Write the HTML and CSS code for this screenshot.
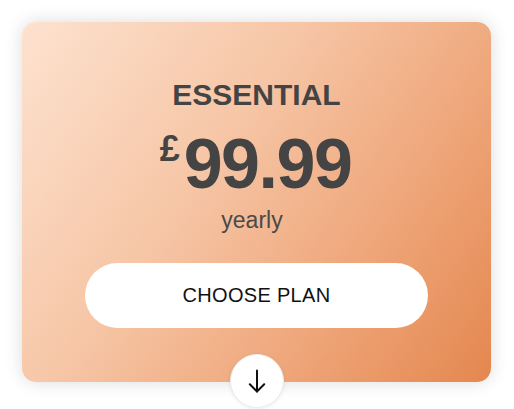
FILE: index.html
```html
<!DOCTYPE html>
<html lang="en">
<head>
  <meta charset="UTF-8">
  <meta name="viewport" content="width=device-width, initial-scale=1.0">
  <title>Essential Plan</title>
  <link rel="stylesheet" href="styles.css">
</head>
<body>
  <main class="plan-card">
    <h1 class="plan-name">ESSENTIAL</h1>
    <div class="plan-price">
      <span class="currency">£</span>
      <span class="amount">99.99</span>
    </div>
    <p class="plan-period">yearly</p>
    <button class="choose-btn">CHOOSE PLAN</button>
    <button class="more-btn" aria-label="More details">
      <svg width="24" height="24" viewBox="0 0 24 24" fill="none" stroke="#111" stroke-width="2" stroke-linecap="round" stroke-linejoin="round">
        <path d="M12 1.5V22.5"/>
        <path d="M4.8 15.3L12 22.5L19.2 15.3"/>
      </svg>
    </button>
  </main>
</body>
</html>
```

FILE: styles.css
```css
* {
  margin: 0;
  padding: 0;
  box-sizing: border-box;
}

html,
body {
  min-height: 100%;
}

body {
  font-family: 'Liberation Sans', Arial, sans-serif;
  background-color: #ffffff;
  color: #444444;
  padding: 22px 0 27px 22px;
}

.plan-card {
  width: 469px;
  padding-top: 58px;
  border-radius: 14px;
  background: linear-gradient(125deg, #fde2cf 0%, #f6c5a5 40%, #eea477 72%, #e4874f 100%);
  box-shadow: 0 0 18px rgba(0, 0, 0, 0.14);
  display: flex;
  flex-direction: column;
  align-items: center;
}

.plan-name {
  font-size: 30px;
  line-height: 1;
  font-weight: bold;
  color: #444444;
}

.plan-price {
  display: flex;
  align-items: flex-start;
  margin-top: 19px;
  gap: 4px;
  margin-left: -2px;
}

.currency {
  font-size: 36px;
  line-height: 1;
  font-weight: bold;
  margin-top: 2px;
}

.amount {
  font-size: 70px;
  line-height: 1;
  font-weight: bold;
  letter-spacing: -1.5px;
}

.plan-period {
  font-size: 23px;
  line-height: 1;
  margin-top: 10px;
  margin-right: 9px;
  color: #4a4a4a;
}

.choose-btn {
  margin-top: 31px;
  width: 343px;
  height: 65px;
  border: none;
  border-radius: 33px;
  background-color: #ffffff;
  color: #111111;
  font-family: inherit;
  font-size: 20px;
  letter-spacing: 0.3px;
  cursor: pointer;
}

.more-btn {
  margin-top: 26px;
  margin-bottom: -26px;
  width: 54px;
  height: 54px;
  border-radius: 50%;
  border: 1px solid #ececec;
  background-color: #ffffff;
  box-shadow: 0 1px 4px rgba(0, 0, 0, 0.08);
  display: flex;
  align-items: center;
  justify-content: center;
  cursor: pointer;
}
```
